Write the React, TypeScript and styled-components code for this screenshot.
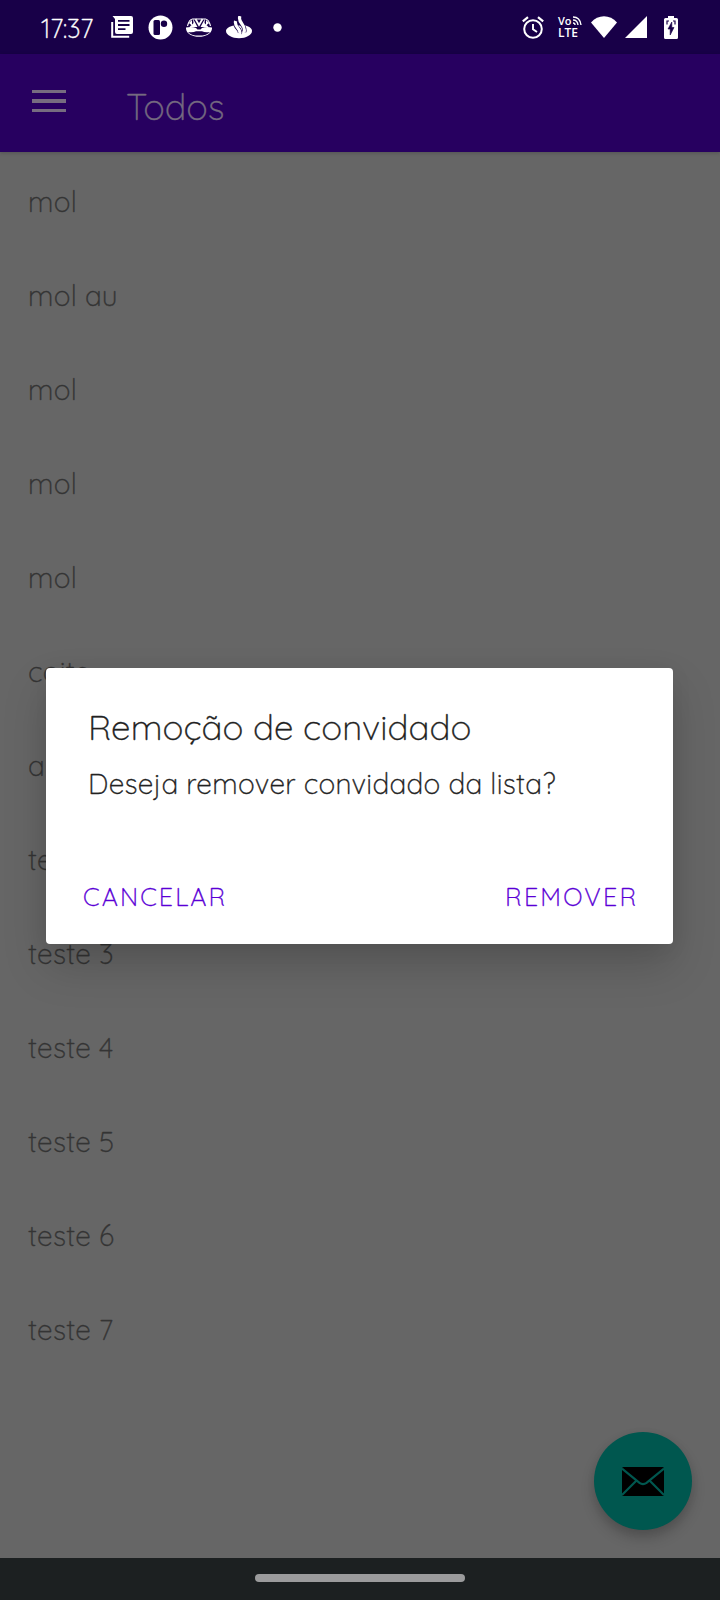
import React from "react";
import styled, { createGlobalStyle } from "styled-components";

const Global = createGlobalStyle`
  *, *::before, *::after { box-sizing: border-box; }
  body { margin: 0; background: #666; }
`;

const Screen = styled.div`
  position: relative;
  display: flex;
  flex-direction: column;
  width: 720px;
  height: 1600px;
  overflow: hidden;
  background: #666666;
  font-family: Quicksand, Lato, sans-serif;
  font-weight: 300;
  -webkit-text-stroke: 0.35px currentColor;
`;

const StatusBar = styled.header`
  display: flex;
  align-items: center;
  justify-content: space-between;
  height: 54px;
  padding: 0 42px 0 41px;
  background: #180048;
  color: #fff;
`;

const Clock = styled.span<{ $spacing: number }>`
  width: 53px;
  margin: 4px 17px 0 0;
  font-size: 26px;
  line-height: 50px;
  white-space: nowrap;
  letter-spacing: ${(p) => p.$spacing}px;
`;

const IconRow = styled.div`
  display: flex;
  align-items: center;
`;

const Glyph = styled.svg<{ $gap?: number }>`
  display: block;
  flex: none;
  margin-left: ${(p) => p.$gap ?? 0}px;
`;

const AppBar = styled.div`
  display: flex;
  align-items: center;
  height: 98px;
  padding-left: 32px;
  background: #270060;
  color: #756a80;
  box-shadow: 0 1px 4px rgba(0, 0, 0, 0.2);
`;

const MenuButton = styled.button`
  display: flex;
  flex-direction: column;
  gap: 6px;
  width: 34px;
  margin: 0 60px 4px 0;
  padding: 0;
  border: 0;
  background: none;
`;

const MenuLine = styled.span`
  height: 3.6px;
  background: #766c80;
`;

const BarTitle = styled.h1`
  margin: 7px 0 0;
  font-size: 36px;
  line-height: 44px;
  font-weight: 300;
`;

const GuestList = styled.ul`
  flex: 1;
  margin: 0;
  padding: 2px 0 0;
  list-style: none;
`;

const Guest = styled.li`
  height: 94px;
  padding-left: 28px;
  color: #343434;
  font-size: 28px;
  line-height: 96px;
  letter-spacing: 0.3px;
`;

const NavBar = styled.footer`
  display: flex;
  justify-content: center;
  height: 42px;
  padding-top: 16px;
  background: #1c2021;
`;

const Handle = styled.span`
  width: 210px;
  height: 8px;
  border-radius: 4px;
  background: #9b9b9c;
`;

const Fab = styled.button`
  position: absolute;
  right: 28px;
  bottom: 70px;
  display: grid;
  place-items: center;
  width: 98px;
  height: 98px;
  padding: 0;
  border: 0;
  border-radius: 50%;
  background: #00574f;
  box-shadow: 0 8px 14px rgba(0, 0, 0, 0.2), 0 2px 8px rgba(0, 0, 0, 0.06);
`;

const Dialog = styled.section`
  position: absolute;
  top: 668px;
  left: 46px;
  display: flex;
  flex-direction: column;
  width: 627px;
  height: 276px;
  padding: 37px 37px 25px 42px;
  border-radius: 4px;
  background: #fff;
  box-shadow: 0 22px 44px rgba(0, 0, 0, 0.17), 0 4px 22px rgba(0, 0, 0, 0.06);
`;

const DialogTitle = styled.h2`
  margin: 0;
  color: #212121;
  font-size: 35px;
  line-height: 44px;
  font-weight: 300;
  white-space: nowrap;
  letter-spacing: 0.05px;
`;

const DialogText = styled.p<{ $spacing: number }>`
  margin: 17px 0 0 0;
  color: #222;
  font-size: 28px;
  line-height: 36px;
  white-space: nowrap;
  letter-spacing: ${(p) => p.$spacing}px;
`;

const Actions = styled.div`
  display: flex;
  justify-content: space-between;
  margin: auto 0 0 -5px;
`;

const Action = styled.button<{ $spacing: number }>`
  padding: 0;
  border: 0;
  background: none;
  color: #5a00d6;
  font: inherit;
  font-size: 25px;
  line-height: 44px;
  letter-spacing: ${(p) => p.$spacing}px;
  margin-right: -${(p) => p.$spacing}px;
`;

const guests = [
  "mol", "mol au", "mol", "mol", "mol", "coite", "a", "teste 2",
  "teste 3", "teste 4", "teste 5", "teste 6", "teste 7",
];

const NewsIcon = () => (
  <Glyph width="22" height="22" viewBox="0 0 22 22" fill="none">
    <path d="M1.200 6v14.800h17" stroke="#fff" strokeWidth="2" />
    <path d="M1.500 0H20a2 2 0 0 1 2 2v14a2 2 0 0 1-2 2H6a2 2 0 0 1-2-2V3Z" fill="#fff" />
    <path d="M7 4.800h11.500M7 9h11.500M7 13.200h7.500" stroke="#180048" strokeWidth="1.800" />
  </Glyph>
);

const CircleBadgeIcon = () => (
  <Glyph $gap={15} width="25" height="25" viewBox="0 0 25 25">
    <circle cx="12.500" cy="12.500" r="12" fill="#fff" />
    <rect x="5.500" y="5" width="6.500" height="15" rx="1.500" fill="#180048" />
    <circle cx="16" cy="8.800" r="3.200" fill="#180048" />
  </Glyph>
);

const FaceIcon = () => (
  <Glyph $gap={13} width="26" height="19" viewBox="0 0 26 19">
    <path d="M1.500 8C2.500 4 4 1.300 6.500 1h13c2.500.3 4 3 5 7" stroke="#fff" strokeWidth="1.100" fill="none" />
    <path d="M7 .8 11.500 9H3.500L7.500 5ZM19 .8 14.500 9h8L18.500 5ZM2.800 5 6 2v5.500ZM23.200 5 20 2v5.500Z" fill="#fff" />
    <path d="m9.500 1 3.500 6 3.500-6" stroke="#fff" strokeWidth="1.800" fill="none" />
    <path d="M0 9.500q6-1 10 .5l1.500 1.500h3L16 10q4-1.500 10-.5c.5 6-6 9.300-13 9.300S-.5 15.500 0 9.500Z" fill="#fff" />
    <path d="M2 14q5 1 8-.8h6q3 1.800 8 .8c-1.800 2.500-5.500 3.600-11 3.600S3.800 16.500 2 14Z" fill="#180048" />
  </Glyph>
);

const FlameIcon = () => (
  <Glyph $gap={14} width="26" height="23" viewBox="0 0 26 23">
    <path d="M7.500 9.500C3 10.500 0 12.500 0 15c0 4 6 7.200 13 7.200S26 19 26 15c0-2.500-2.500-4.500-6.500-5.500Z" fill="#fff" />
    <path d="M9.600 6c-.6 2.500.5 4.500 2.400 6.500s2.500 3 1.800 5M14 1c-1.200 3 0 5 2 7.500s3.200 4.500 2 7.500" stroke="#180048" strokeWidth="4.400" fill="none" />
    <path d="M9.600 5c-.8 3 .5 5 2.400 7.200s2.500 3.300 1.800 5.800M14 0c-1.400 3 0 5.500 2 8s3.200 4.500 2 8.500" stroke="#fff" strokeWidth="3.200" fill="none" />
  </Glyph>
);

const DotIcon = () => (
  <Glyph $gap={21} width="9" height="9" viewBox="0 0 9 9">
    <circle cx="4.500" cy="4.500" r="4.200" fill="#fff" />
  </Glyph>
);

const AlarmIcon = () => (
  <Glyph width="22" height="23" viewBox="0 0 22 23" fill="none" stroke="#fff">
    <circle cx="11" cy="13" r="8.800" strokeWidth="2" />
    <path d="M.8 5.400 6 1.200M21.200 5.400 16 1.200" strokeWidth="2.200" />
    <path d="M11 8v5.200l4 2.800" strokeWidth="1.900" />
  </Glyph>
);

const LteBadge = styled.div`
  display: flex;
  flex-direction: column;
  width: 25px;
  margin-left: 14px;
  font: 600 12px/12px "Open Sans", sans-serif;
  -webkit-text-stroke: 0;
`;

const VoLine = styled.div`
  display: flex;
  height: 11px;
  font-size: 11px;
  line-height: 10px;
`;

const WifiIcon = () => (
  <Glyph $gap={8} width="26" height="22" viewBox="0 0 26 22">
    <path d="M0 6.500C7-2 19-2 26 6.500L13 22Z" fill="#fff" />
  </Glyph>
);

const SignalIcon = () => (
  <Glyph $gap={8} width="22" height="22" viewBox="0 0 22 22">
    <path d="M22 0v22H0Z" fill="#fff" />
  </Glyph>
);

const BatteryIcon = () => (
  <Glyph $gap={17} width="14" height="23" viewBox="0 0 14 23">
    <path d="M4 0h6v2h2.500A1.500 1.500 0 0 1 14 3.500v18a1.500 1.500 0 0 1-1.500 1.500h-11A1.500 1.500 0 0 1 0 21.500v-18A1.500 1.500 0 0 1 1.500 2H4Z" fill="#fff" />
    <path d="M7.800 6v5.500H10L6.200 19V13H4Z" fill="#180048" stroke="#180048" strokeWidth=".6" />
    <path d="M5 5H3v3.500M9 5h2v3.500" fill="none" stroke="#180048" strokeWidth="1.200" />
  </Glyph>
);

const MailIcon = () => (
  <Glyph width="42" height="29" viewBox="0 0 42 29">
    <rect width="42" height="29" rx="1.500" fill="#000" />
    <path d="M0 1.500 17.500 15.800q3.500 2.500 7 0L42 1.500M0 28 14.500 13.500M42 28 27.500 13.500" stroke="#00574f" strokeWidth="2.200" fill="none" />
  </Glyph>
);

export default function App() {
  return (
    <Screen>
      <Global />
      <StatusBar>
        <IconRow>
          <Clock $spacing={-0.2}>17:37</Clock>
          <NewsIcon />
          <CircleBadgeIcon />
          <FaceIcon />
          <FlameIcon />
          <DotIcon />
        </IconRow>
        <IconRow>
          <AlarmIcon />
          <LteBadge>
            <VoLine>
              <span>Vo</span>
              <Glyph width="10" height="10" viewBox="0 0 10 10" fill="none" stroke="#fff" strokeWidth="1.400">
                <path d="M1 1q7 0 8 8M1 4q4.500 0 5 5M1 7q2 0 2 2" />
              </Glyph>
            </VoLine>
            <span>LTE</span>
          </LteBadge>
          <WifiIcon />
          <SignalIcon />
          <BatteryIcon />
        </IconRow>
      </StatusBar>
      <AppBar>
        <MenuButton aria-label="Menu">
          <MenuLine />
          <MenuLine />
          <MenuLine />
        </MenuButton>
        <BarTitle>Todos</BarTitle>
      </AppBar>
      <GuestList>
        {guests.map((name, i) => (
          <Guest key={i}>{name}</Guest>
        ))}
      </GuestList>
      <NavBar>
        <Handle />
      </NavBar>
      <Fab aria-label="E-mail">
        <MailIcon />
      </Fab>
      <Dialog role="dialog">
        <DialogTitle>Remoção de convidado</DialogTitle>
        <DialogText $spacing={0.28}>Deseja remover convidado da lista?</DialogText>
        <Actions>
          <Action $spacing={2.1}>CANCELAR</Action>
          <Action $spacing={2.2}>REMOVER</Action>
        </Actions>
      </Dialog>
    </Screen>
  );
}
